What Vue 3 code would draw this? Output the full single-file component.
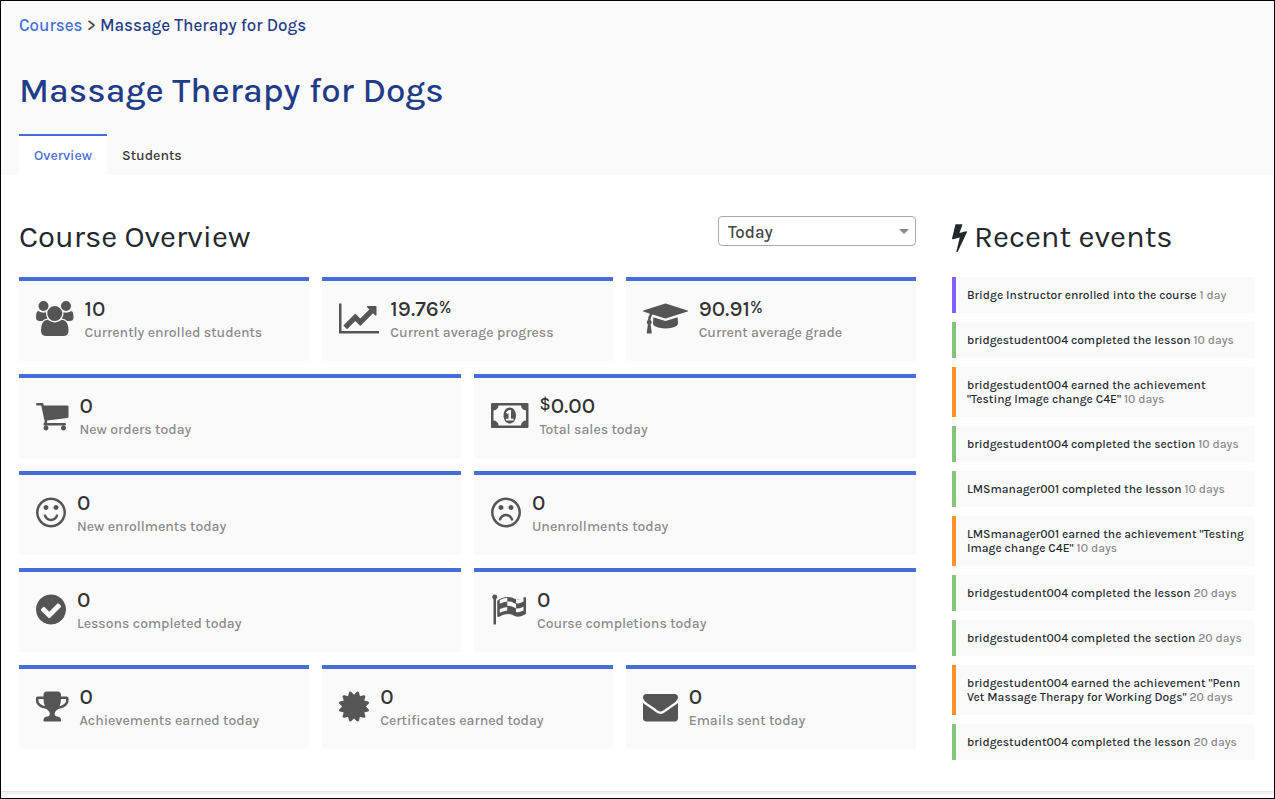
<script setup>
import { ref } from 'vue'

const period = ref('Today')

const icons = {
  users: {
    box: [0, 1920],
    d: 'M593 896q-162 5-265 128h-134q-82 0-138-40.5t-56-118.5q0-353 124-353 6 0 43.5 21t97.5 42.5 119 21.5q67 0 133-23-5 37-5 66 0 139 81 256zm1071 637q0 120-73 189.5t-194 69.5h-874q-121 0-194-69.5t-73-189.5q0-53 3.5-103.5t14-109 26.5-108.5 43-97.5 62-81 85.5-53.5 111.5-20q10 0 43 21.5t73 48 107 48 135 21.5 135-21.5 107-48 73-48 43-21.5q61 0 111.5 20t85.5 53.5 62 81 43 97.5 26.5 108.5 14 109 3.5 103.5zm-1024-1277q0 106-75 181t-181 75-181-75-75-181 75-181 181-75 181 75 75 181zm704 384q0 159-112.5 271.5t-271.5 112.5-271.5-112.5-112.5-271.5 112.5-271.5 271.5-112.5 271.5 112.5 112.5 271.5zm576 225q0 78-56 118.5t-138 40.5h-134q-103-123-265-128 81-117 81-256 0-29-5-66 66 23 133 23 59 0 119-21.5t97.5-42.5 43.5-21q124 0 124 353zm-128-609q0 106-75 181t-181 75-181-75-75-181 75-181 181-75 181 75 75 181z'
  },
  chart: {
    box: [0, 2048],
    d: 'M2048 1536v128h-2048v-1536h128v1408h1920zm-128-1248v435q0 21-19.5 29.5t-35.5-7.5l-121-121-633 633q-10 10-23 10t-23-10l-233-233-416 416-192-192 585-585q10-10 23-10t23 10l233 233 464-464-121-121q-16-16-7.5-35.5t29.5-19.5h435q14 0 23 9t9 23z'
  },
  cap: {
    box: [0, 2304],
    d: 'M1774 836l18 316q4 69-82 128t-235 93.5-323 34.5-323-34.5-235-93.5-82-128l18-316 574 181q22 7 48 7t48-7zm530-324q0 23-22 31l-1120 352q-4 1-10 1t-10-1l-652-206q-43 34-71 111.5t-34 178.5q63 36 63 109 0 69-58 107l58 433q2 14-8 25-9 11-24 11h-192q-15 0-24-11-10-11-8-25l58-433q-58-38-58-107 0-73 65-111 11-207 98-330l-333-104q-22-8-22-31t22-31l1120-352q4-1 10-1t10 1l1120 352q22 8 22 31z'
  },
  cart: {
    box: [0, 1664],
    d: 'M640 1536q0 52-38 90t-90 38-90-38-38-90 38-90 90-38 90 38 38 90zm896 0q0 52-38 90t-90 38-90-38-38-90 38-90 90-38 90 38 38 90zm128-1088v512q0 24-16.5 42.5t-40.5 21.5l-1044 122q13 60 13 70 0 16-24 64h920q26 0 45 19t19 45-19 45-45 19h-1024q-26 0-45-19t-19-45q0-11 8-31.5t16-36 21.5-40 15.5-29.5l-177-823h-204q-26 0-45-19t-19-45 19-45 45-19h256q16 0 28.5 6.5t19.5 15.5 13 24.5 8 26 5.5 29.5 4.5 26h1201q26 0 45 19t19 45z'
  },
  money: {
    box: [0, 1920],
    d: 'M768 1152h384v-96h-128v-448h-114l-148 137 77 80q42-37 55-57h2v288h-128v96zm512-256q0 70-21 142t-59.5 134-101.5 101-138 39-138-39-101.5-101-59.5-134-21-142 21-142 59.5-134 101.5-101 138-39 138 39 101.5 101 59.5 134 21 142zm512 256v-512q-106 0-181-75t-75-181h-1152q0 106-75 181t-181 75v512q106 0 181 75t75 181h1152q0-106 75-181t181-75zm128-832v1152q0 26-19 45t-45 19h-1792q-26 0-45-19t-19-45v-1152q0-26 19-45t45-19h1792q26 0 45 19t19 45z'
  },
  smile: {
    box: [128, 1536],
    d: 'M1262 1075q-37 121-138 195t-228 74-228-74-138-195q-8-25 4-48.5t38-31.5q25-8 48.5 4t31.5 38q25 80 92.5 129.5t151.5 49.5 151.5-49.5 92.5-129.5q8-26 32-38t49-4 37 31.5 4 48.5zm-494-435q0 53-37.5 90.5t-90.5 37.5-90.5-37.5-37.5-90.5 37.5-90.5 90.5-37.5 90.5 37.5 37.5 90.5zm512 0q0 53-37.5 90.5t-90.5 37.5-90.5-37.5-37.5-90.5 37.5-90.5 90.5-37.5 90.5 37.5 37.5 90.5zm256 256q0-130-51-248.5t-136.5-204-204-136.5-248.5-51-248.5 51-204 136.5-136.5 204-51 248.5 51 248.5 136.5 204 204 136.5 248.5 51 248.5-51 204-136.5 136.5-204 51-248.5zm128 0q0 209-103 385.5t-279.5 279.5-385.5 103-385.5-103-279.5-279.5-103-385.5 103-385.5 279.5-279.5 385.5-103 385.5 103 279.5 279.5 103 385.5z'
  },
  frown: {
    box: [128, 1536],
    d: 'M1262 1229q8 25-4 48.5t-37 31.5-49-4-32-38q-25-80-92.5-129.5t-151.5-49.5-151.5 49.5-92.5 129.5q-8 26-31.5 38t-48.5 4q-26-8-38-31.5t-4-48.5q37-121 138-195t228-74 228 74 138 195zm-494-589q0 53-37.5 90.5t-90.5 37.5-90.5-37.5-37.5-90.5 37.5-90.5 90.5-37.5 90.5 37.5 37.5 90.5zm512 0q0 53-37.5 90.5t-90.5 37.5-90.5-37.5-37.5-90.5 37.5-90.5 90.5-37.5 90.5 37.5 37.5 90.5zm256 256q0-130-51-248.5t-136.5-204-204-136.5-248.5-51-248.5 51-204 136.5-136.5 204-51 248.5 51 248.5 136.5 204 204 136.5 248.5 51 248.5-51 204-136.5 136.5-204 51-248.5zm128 0q0 209-103 385.5t-279.5 279.5-385.5 103-385.5-103-279.5-279.5-103-385.5 103-385.5 279.5-279.5 385.5-103 385.5 103 279.5 279.5 103 385.5z'
  },
  check: {
    box: [128, 1536],
    d: 'M1412 734q0-28-18-46l-91-90q-19-19-45-19t-45 19l-408 407-226-226q-19-19-45-19t-45 19l-91 90q-18 18-18 46 0 27 18 45l362 362q19 19 45 19 27 0 46-19l543-543q18-18 18-45zm252 162q0 209-103 385.5t-279.5 279.5-385.5 103-385.5-103-279.5-279.5-103-385.5 103-385.5 279.5-279.5 385.5-103 385.5 103 279.5 279.5 103 385.5z'
  },
  flag: {
    box: [0, 1792],
    d: 'M832 951v-185q-190 18-384 108v184q194-92 384-107zm0-469v-188q-181 16-384 117v185q205-96 384-114zm832 463v-184q-235 116-384 71v-224q-20-6-39-15-5-3-33-17t-34.5-17-31.5-15-34.5-15.5-32.5-13-36-12.5-35-8.5-39.5-7.5-39.5-4-44-2q-23 0-49 3v222h19q102 0 192.5 29t197.5 82q19 9 39 15v188q42 17 91 17 120 0 293-92zm0-459v-189q-169 91-306 91-45 0-78-8v196q148 42 384-90zm-1344-230q0 35-17.5 64t-46.5 46v1266q0 14-9 23t-23 9h-64q-14 0-23-9t-9-23v-1266q-29-17-46.5-46t-17.5-64q0-53 37.5-90.5t90.5-37.5 90.5 37.5 37.5 90.5zm1472 64v763q0 39-35 57-10 5-17 9-218 116-369 116-88 0-158-35l-28-14q-64-33-99-48t-91-29-114-14q-102 0-235.5 44t-228.5 102q-15 9-33 9-16 0-32-8-32-19-32-56v-742q0-35 31-55 35-21 78.5-42.5t114-52 152.5-49.5 155-19q112 0 209 31t209 86q38 19 89 19 122 0 310-112 22-12 31-17 31-16 62 2 31 20 31 55z'
  },
  trophy: {
    box: [64, 1664],
    d: 'M522 883q-74-162-74-371h-256v96q0 78 94.5 162t235.5 113zm1078-275v-96h-256q0 209-74 371 141-29 235.5-113t94.5-162zm128-128v128q0 71-41.5 143t-112 130-173 97.5-215.5 44.5q-42 54-95 95-38 34-52.5 72.5t-14.5 89.5q0 54 30.5 91t97.5 37q75 0 133.5 45.5t58.5 114.5v64q0 14-9 23t-23 9h-832q-14 0-23-9t-9-23v-64q0-69 58.5-114.5t133.5-45.5q67 0 97.5-37t30.5-91q0-51-14.5-89.5t-52.5-72.5q-53-41-95-95-113-5-215.5-44.5t-173-97.5-112-130-41.5-143v-128q0-40 28-68t68-28h288v-96q0-66 47-113t113-47h576q66 0 113 47t47 113v96h288q40 0 68 28t28 68z'
  },
  certificate: {
    box: [128, 1536],
    d: 'M1504 896l138 135q30 28 20 70-12 41-52 51l-188 48 53 186q12 41-19 70-29 31-70 19l-186-53-48 188q-10 40-51 52-12 2-19 2-31 0-51-22l-135-138-135 138q-28 30-70 20-41-11-51-52l-48-188-186 53q-41 12-70-19-31-29-19-70l53-186-188-48q-40-10-52-51-10-42 20-70l138-135-138-135q-30-28-20-70 12-41 52-51l188-48-53-186q-12-41 19-70 29-31 70-19l186 53 48-188q10-41 51-51 41-12 70 19l135 139 135-139q29-30 70-19 41 10 51 51l48 188 186-53q41-12 70 19 31 29 19 70l-53 186 188 48q40 10 52 51 10 42-20 70z'
  },
  envelope: {
    box: [0, 1792],
    d: 'M1792 710v794q0 66-47 113t-113 47h-1472q-66 0-113-47t-47-113v-794q44 49 101 87 362 246 497 345 57 42 92.5 65.5t94.5 48 110 24.5h2q51 0 110-24.5t94.5-48 92.5-65.5q170-123 498-345 57-39 100-87zm0-294q0 79-49 151t-122 123q-376 261-468 325-10 7-42.5 31t-54 38.5-52 32.5-57.5 27-50 9h-2q-23 0-50-9t-57.5-27-52-32.5-54-38.5-42.5-31q-91-64-262-182.5t-205-142.5q-62-42-117-115.5t-55-136.5q0-78 41.5-130t118.5-52h1472q65 0 112.5 47t47.5 113z'
  }
}

const rows = [
  [
    { icon: 'users', value: '10', label: 'Currently enrolled students' },
    { icon: 'chart', value: '19.76', suffix: '%', label: 'Current average progress' },
    { icon: 'cap', value: '90.91', suffix: '%', label: 'Current average grade' }
  ],
  [
    { icon: 'cart', value: '0', label: 'New orders today' },
    { icon: 'money', prefix: '$', value: '0.00', label: 'Total sales today' }
  ],
  [
    { icon: 'smile', value: '0', label: 'New enrollments today' },
    { icon: 'frown', value: '0', label: 'Unenrollments today' }
  ],
  [
    { icon: 'check', value: '0', label: 'Lessons completed today' },
    { icon: 'flag', value: '0', label: 'Course completions today' }
  ],
  [
    { icon: 'trophy', value: '0', label: 'Achievements earned today' },
    { icon: 'certificate', value: '0', label: 'Certificates earned today' },
    { icon: 'envelope', value: '0', label: 'Emails sent today' }
  ]
]

const events = [
  { kind: 'enrolled', text: 'Bridge Instructor enrolled into the course', age: '1 day' },
  { kind: 'completed', text: 'bridgestudent004 completed the lesson', age: '10 days' },
  { kind: 'earned', text: 'bridgestudent004 earned the achievement "Testing Image change C4E"', age: '10 days' },
  { kind: 'completed', text: 'bridgestudent004 completed the section', age: '10 days' },
  { kind: 'completed', text: 'LMSmanager001 completed the lesson', age: '10 days' },
  { kind: 'earned', text: 'LMSmanager001 earned the achievement "Testing Image change C4E"', age: '10 days' },
  { kind: 'completed', text: 'bridgestudent004 completed the lesson', age: '20 days' },
  { kind: 'completed', text: 'bridgestudent004 completed the section', age: '20 days' },
  { kind: 'earned', text: 'bridgestudent004 earned the achievement "Penn Vet Massage Therapy for Working Dogs"', age: '20 days' },
  { kind: 'completed', text: 'bridgestudent004 completed the lesson', age: '20 days' }
]
</script>

<template>
  <div class="page">
    <header class="header">
      <nav class="crumbs" aria-label="Breadcrumb">
        <a href="#courses">Courses</a> &gt; <span class="current">Massage Therapy for Dogs</span>
      </nav>
      <h1>Massage Therapy for Dogs</h1>
      <nav class="tabs" aria-label="Course sections">
        <a href="#overview" class="tab active" aria-current="page">Overview</a>
        <a href="#students" class="tab">Students</a>
      </nav>
    </header>

    <main class="content">
      <section class="overview">
        <div class="heading">
          <h2>Course Overview</h2>
          <div class="picker">
            <select v-model="period" aria-label="Period">
              <option>Today</option>
              <option>Yesterday</option>
              <option>This week</option>
              <option>This month</option>
            </select>
          </div>
        </div>
        <div class="cards">
          <div v-for="(row, i) in rows" :key="i" class="row">
            <article v-for="card in row" :key="card.label" class="card">
              <svg class="icon" :viewBox="`${icons[card.icon].box[0]} 0 ${icons[card.icon].box[1]} 1792`" aria-hidden="true">
                <path :d="icons[card.icon].d" />
              </svg>
              <div>
                <p class="value"><span v-if="card.prefix" class="unit">{{ card.prefix }}</span>{{ card.value }}<span v-if="card.suffix" class="unit">{{ card.suffix }}</span></p>
                <p class="label">{{ card.label }}</p>
              </div>
            </article>
          </div>
        </div>
      </section>

      <aside class="events">
        <div class="heading">
          <h2>
            <svg class="bolt" viewBox="448 0 896 1792" aria-hidden="true">
              <path d="M1333 566q18 20 7 44l-540 1157q-13 25-42 25-4 0-14-2-17-5-25.5-19t-4.5-30l197-808-406 101q-4 1-12 1-18 0-31-11-18-15-13-39l201-825q4-14 16-23t28-9h328q19 0 32 12.5t13 29.5q0 8-5 18l-171 463 396-98q8-2 12-2 19 0 34 15z" />
            </svg>
            Recent events
          </h2>
        </div>
        <ul>
          <li v-for="(event, i) in events" :key="i" :class="event.kind">
            {{ event.text }} <span class="age">{{ event.age }}</span>
          </li>
        </ul>
      </aside>
    </main>
    <footer class="footer"></footer>
  </div>
</template>

<style>
body {
  margin: 0;
}
</style>

<style scoped>
.page {
  box-sizing: border-box;
  min-height: 100vh;
  display: flex;
  flex-direction: column;
  border: 1px solid #000;
  background: #fff;
  color: #23282d;
  font-family: Karla, Inter, "Liberation Sans", sans-serif;
  font-weight: 500;
}

h1,
h2,
p,
ul {
  margin: 0;
  padding: 0;
}

a {
  text-decoration: none;
}

.header {
  padding: 12px 18px 0;
  background: #fafafa;
}

.crumbs {
  color: #444;
  font-size: 17px;
  line-height: 24px;
}

.crumbs a {
  color: #466dd8;
}

.crumbs .current {
  color: #1f3c88;
}

h1 {
  margin-top: 32px;
  color: #1f3c88;
  font-size: 35px;
  font-weight: 500;
  line-height: 44px;
}

.tabs {
  display: flex;
  margin-top: 21px;
}

.tab {
  padding: 11px 15px;
  border-top: 2px solid transparent;
  color: #333;
  font-size: 14px;
  line-height: 17px;
}

.tab.active {
  border-color: #466dd8;
  background: #fff;
  color: #466dd8;
}

.content {
  flex: 1;
  display: grid;
  grid-template-columns: 897fr 303fr;
  align-items: start;
  gap: 36px;
  padding: 41px 19px 30px 18px;
}

.heading {
  display: flex;
  justify-content: space-between;
  align-items: flex-start;
  height: 61px;
}

h2 {
  display: flex;
  align-items: center;
  gap: 7px;
  font-size: 31px;
  font-weight: 400;
  line-height: 42px;
}

.bolt {
  height: 30px;
  fill: #23282d;
}

.picker {
  position: relative;
  width: 198px;
}

.picker::after {
  content: "";
  position: absolute;
  top: 13px;
  right: 7px;
  border: 5px solid transparent;
  border-top-color: #888;
  border-bottom: 0;
  pointer-events: none;
}

select {
  display: block;
  box-sizing: border-box;
  width: 100%;
  height: 30px;
  padding: 1px 24px 0 9px;
  border: 1px solid #aaa;
  border-radius: 4px;
  appearance: none;
  background: #fff;
  color: #444;
  font: inherit;
  font-size: 17px;
}

.cards {
  display: grid;
  gap: 13px;
}

.row {
  display: flex;
  gap: 13px;
}

.card {
  flex: 1;
  display: flex;
  gap: 11px;
  padding: 20px 17px 19px;
  border-top: 4px solid #466dd8;
  background: #fafafa;
}

.icon {
  flex: none;
  height: 35px;
  fill: #555;
}

.value {
  color: #333;
  font-size: 22px;
  line-height: 16px;
}

.unit {
  font-size: 17px;
  line-height: 10px;
  vertical-align: 3px;
}

.label {
  margin-top: 7px;
  color: #888;
  font-size: 14px;
  line-height: 18px;
}

ul {
  display: grid;
  gap: 9px;
  list-style: none;
}

li {
  padding: 11px;
  border-left: 4px solid #84c57a;
  background: #fafafa;
  font-size: 12px;
  line-height: 14px;
}

.enrolled {
  border-color: #8560f5;
}

.earned {
  border-color: #ff922e;
}

.age {
  color: #888;
}

.footer {
  height: 6px;
  border-top: 1px solid #e5e5e5;
  background: linear-gradient(#efefef, #fafafa 3px);
}
</style>
